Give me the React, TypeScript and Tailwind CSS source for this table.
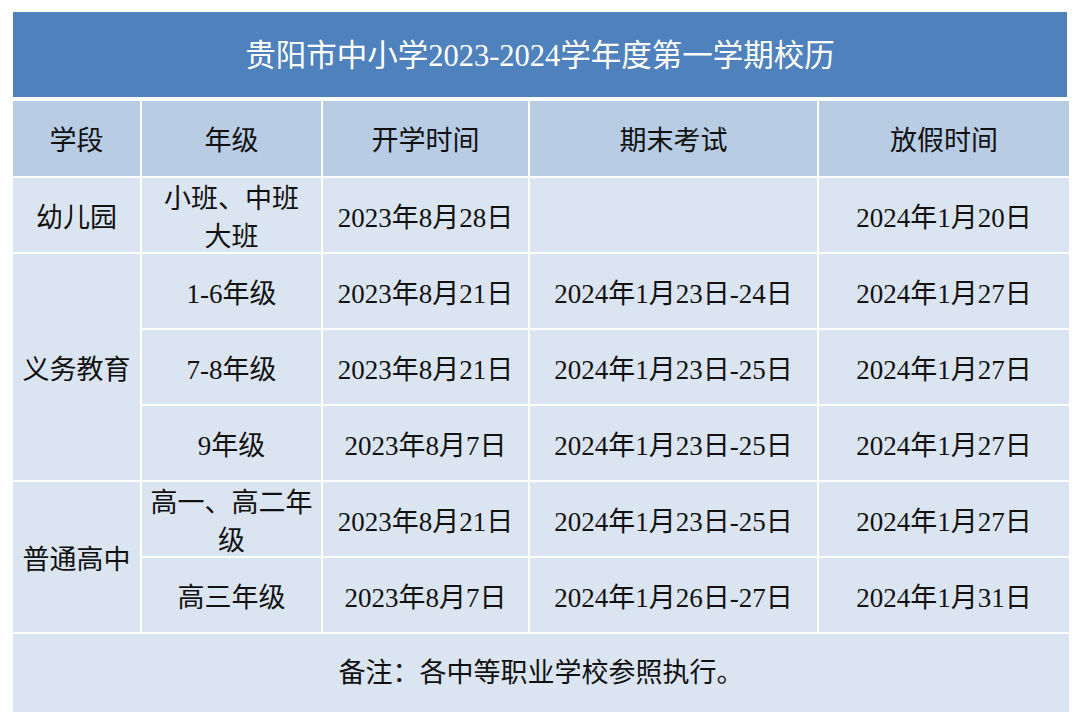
// App.tsx
const font = { fontFamily: '"Liberation Serif", "Noto Sans CJK SC", serif' };

type Row = {
  grade: React.ReactNode;
  start: string;
  exam: string;
  off: string;
};

const compulsory: Row[] = [
  { grade: "1-6年级", start: "2023年8月21日", exam: "2024年1月23日-24日", off: "2024年1月27日" },
  { grade: "7-8年级", start: "2023年8月21日", exam: "2024年1月23日-25日", off: "2024年1月27日" },
  { grade: "9年级", start: "2023年8月7日", exam: "2024年1月23日-25日", off: "2024年1月27日" },
];

const senior: Row[] = [
  {
    grade: (
      <>
        高一、高二年
        <br />级
      </>
    ),
    start: "2023年8月21日",
    exam: "2024年1月23日-25日",
    off: "2024年1月27日",
  },
  { grade: "高三年级", start: "2023年8月7日", exam: "2024年1月26日-27日", off: "2024年1月31日" },
];

const Cell = ({ children, className = "pt-[5px]" }: { children?: React.ReactNode; className?: string }) => (
  <div className={`flex items-center justify-center text-center bg-[#dbe5f1] leading-[38px] ${className}`}>
    {children}
  </div>
);

const Head = ({ children }: { children: React.ReactNode }) => (
  <div className="flex items-center justify-center bg-[#b8cce4] pt-[5px]">{children}</div>
);

const App = () => {
  return (
    <div className="w-[1080px] h-[712px] overflow-hidden bg-white pt-[12px] pl-[13px] text-[27px] text-[#111]" style={font}>
      <div className="w-[1054px] h-[85px] bg-[#4f81bd] flex items-center justify-center text-white text-[30.5px] pt-[4px] mb-[4px]">
        贵阳市中小学2023-2024学年度第一学期校历
      </div>

      <div className="grid grid-cols-[127px_179px_205px_287px_250px] grid-rows-[75px_74px_74px_74px_74px_74px_74px_78px] gap-[2px]">
        <Head>学段</Head>
        <Head>年级</Head>
        <Head>开学时间</Head>
        <Head>期末考试</Head>
        <Head>放假时间</Head>

        <Cell>幼儿园</Cell>
        <Cell>
          <span>
            小班、中班
            <br />
            大班
          </span>
        </Cell>
        <Cell>2023年8月28日</Cell>
        <Cell></Cell>
        <Cell>2024年1月20日</Cell>

        <Cell className="row-span-3 pt-[5px]">义务教育</Cell>
        {compulsory.map((r, i) => (
          <div key={i} className="contents">
            <Cell>{r.grade}</Cell>
            <Cell>{r.start}</Cell>
            <Cell>{r.exam}</Cell>
            <Cell>{r.off}</Cell>
          </div>
        ))}

        <Cell className="row-span-2 pt-[5px]">普通高中</Cell>
        {senior.map((r, i) => (
          <div key={i} className="contents">
            <Cell>
              <span>{r.grade}</span>
            </Cell>
            <Cell>{r.start}</Cell>
            <Cell>{r.exam}</Cell>
            <Cell>{r.off}</Cell>
          </div>
        ))}

        <Cell className="col-span-5">备注：各中等职业学校参照执行。</Cell>
      </div>
    </div>
  );
};

export default App;
